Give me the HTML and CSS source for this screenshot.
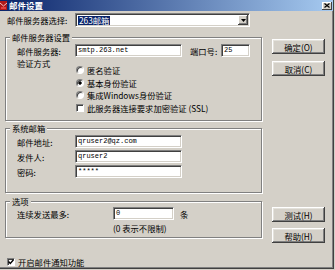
FILE: index.html
```html
<!DOCTYPE html>
<html lang="zh-CN">
<head>
<meta charset="utf-8">
<title>邮件设置</title>
<link rel="stylesheet" href="styles.css">
</head>
<body>
<div class="window">
  <div class="titlebar">
    <svg class="app-icon" width="7" height="9" viewBox="0 0 7 9"><rect x="0" y="0" width="7" height="9" fill="#b01818"/><path d="M0 2 L3.5 5 L7 2" fill="none" stroke="#f2c0c0" stroke-width="1"/><rect x="1" y="6" width="5" height="2" fill="#e04040"/></svg>
    <span class="title">邮件设置</span>
    <span class="close"><svg width="6" height="5" viewBox="0 0 6 5"><path d="M0.5 0.5 L5.5 4.5 M5.5 0.5 L0.5 4.5" stroke="#000" stroke-width="1.2"/></svg></span>
  </div>
  <div class="content">
    <div class="top-row">
      <span class="top-label">邮件服务器选择:</span>
      <div class="combo">
        <span class="combo-sel">263邮箱</span>
        <span class="combo-btn"><svg width="5" height="3" viewBox="0 0 5 3"><path d="M0 0 H5 L2.5 3 Z" fill="#000"/></svg></span>
      </div>
    </div>
    <div class="main">
      <div class="left">
        <fieldset class="group g1">
          <legend>邮件服务器设置</legend>
          <div class="inner">
            <div class="row">
              <span class="lbl">邮件服务器:</span>
              <div class="input w-smtp">smtp.263.net</div>
              <span class="lbl-port">端口号:</span>
              <div class="input w-port">25</div>
            </div>
            <div class="auth">
              <span class="lbl auth-lbl">验证方式</span>
              <div class="options">
                <div class="opt"><span class="radio"></span>匿名验证</div>
                <div class="opt"><span class="radio on"></span>基本身份验证</div>
                <div class="opt"><span class="radio"></span>集成Windows身份验证</div>
                <div class="opt"><span class="check"></span>此服务器连接要求加密验证 (SSL)</div>
              </div>
            </div>
          </div>
        </fieldset>
        <fieldset class="group g2">
          <legend>系统邮箱</legend>
          <div class="inner">
            <div class="row"><span class="lbl">邮件地址:</span><div class="input w-mail">qruser2@qz.com</div></div>
            <div class="row"><span class="lbl">发件人:</span><div class="input w-mail">qruser2</div></div>
            <div class="row"><span class="lbl">密码:</span><div class="input w-mail">*****</div></div>
          </div>
        </fieldset>
        <fieldset class="group g3">
          <legend>选项</legend>
          <div class="inner">
            <div class="row"><span class="lbl lbl-wide">连续发送最多:</span><div class="input w-num">0</div><span class="unit">条</span></div>
            <div class="note">(0 表示不限制)</div>
          </div>
        </fieldset>
      </div>
      <div class="right">
        <button class="btn b-ok">确定(O)</button>
        <button class="btn b-cancel">取消(C)</button>
        <button class="btn b-test">测试(H)</button>
        <button class="btn b-help">帮助(H)</button>
      </div>
    </div>
    <div class="notify"><span class="check checked"><svg width="6" height="6" viewBox="0 0 6 6"><path d="M0.5 2.5 L2.3 4.5 L5.5 0.8" fill="none" stroke="#000" stroke-width="1.4"/></svg></span>开启邮件通知功能</div>
  </div>
</div>
</body>
</html>
```
FILE: styles.css
```css
* { box-sizing: border-box; }
html, body { margin: 0; padding: 0; }
body {
  width: 335px;
  height: 270px;
  overflow: hidden;
  background: #d4d0c8;
  font-family: "Noto Sans CJK SC", "Noto Sans", sans-serif;
  font-size: 8.3px;
  color: #000;
}
.window {
  width: 334px;
  height: 269px;
  background: #d4d0c8;
  box-shadow: inset -1px -1px #404040, inset -2px -2px #808080;
  display: flex;
  flex-direction: column;
}
.titlebar {
  height: 11px;
  margin-right: 1px;
  background: linear-gradient(to right, #0a246a, #a6caf0);
  display: flex;
  align-items: center;
}
.app-icon { display: block; margin-left: 0; }
.title {
  margin-left: 2px;
  color: #fff;
  font-weight: bold;
  font-size: 8.5px;
  line-height: 11px;
}
.close {
  margin-left: auto;
  margin-right: 1px;
  width: 10px;
  height: 8px;
  background: #d4d0c8;
  box-shadow: inset -1px -1px #404040, inset 1px 1px #fff;
  display: flex;
  align-items: center;
  justify-content: center;
}
.close svg { display: block; }
.content {
  padding: 2px 9px 0 5px;
  display: flex;
  flex-direction: column;
}
.top-row {
  display: flex;
  align-items: center;
  height: 14px;
}
.top-label { width: 70px; padding-left: 2px; line-height: 12px; }
.combo {
  width: 175px;
  height: 14px;
  padding: 2px;
  background: #fff;
  border: 1px solid;
  border-color: #808080 #fff #fff #808080;
  box-shadow: inset 1px 1px #404040, inset -1px -1px #d4d0c8;
  display: flex;
  align-items: center;
}
.combo-sel {
  background: #0a246a;
  color: #fff;
  line-height: 9px;
  padding: 0 1px;
  margin-left: 0;
}
.combo-btn {
  margin-left: auto;
  width: 10px;
  height: 10px;
  margin-right: -1px;
  background: #d4d0c8;
  box-shadow: inset -1px -1px #404040, inset 1px 1px #fff, inset -2px -2px #808080;
  display: flex;
  align-items: center;
  justify-content: center;
}
.combo-btn svg { display: block; }
.main {
  display: flex;
  margin-top: 4px;
}
.left {
  width: 257px;
  display: flex;
  flex-direction: column;
}
.group {
  margin: 0;
  padding: 0;
  min-width: 0;
  border: 1px solid #808080;
  box-shadow: inset 1px 1px #fff, 1px 1px #fff;
}
.group legend {
  margin-left: 4px;
  padding: 0 2px;
  line-height: 12px;
  background: #d4d0c8;
}
.inner { padding-left: 11px; }
.g1 .inner { padding-top: 1px; padding-bottom: 6px; }
.g2 { margin-top: 1px; }
.g2 .inner { padding-top: 1px; padding-bottom: 14px; display: flex; flex-direction: column; gap: 2px; }
.g3 { margin-top: 2px; }
.g3 .inner { padding-bottom: 3px; }
.row {
  display: flex;
  align-items: center;
  height: 13px;
}
.lbl { width: 58px; line-height: 12px; }
.lbl-wide { width: 96px; }
.input {
  height: 13px;
  padding: 0 2px;
  background: #fff;
  border: 1px solid;
  border-color: #808080 #fff #fff #808080;
  box-shadow: inset 1px 1px #404040, inset -1px -1px #d4d0c8;
  font-family: "Liberation Mono", monospace;
  font-size: 7px;
  line-height: 11px;
  white-space: nowrap;
}
.w-smtp { width: 107px; }
.lbl-port { margin-left: 8px; width: 31px; line-height: 12px; }
.w-port { width: 29px; }
.w-mail { width: 107px; }
.w-num { width: 61px; }
.unit { margin-left: 6px; line-height: 12px; }
.auth { display: flex; }
.auth-lbl { line-height: 12px; }
.options {
  margin-top: 7px;
  display: flex;
  flex-direction: column;
}
.opt {
  display: flex;
  align-items: center;
  height: 12.5px;
  line-height: 12px;
}
.radio {
  width: 8px;
  height: 8px;
  margin-left: 1px;
  margin-right: 3px;
  border-radius: 50%;
  background: #fff;
  border: 1px solid;
  border-color: #808080 #fff #fff #808080;
  box-shadow: inset 1px 1px #404040;
}
.radio.on { background: radial-gradient(circle, #000 1.4px, #fff 1.9px); }
.check {
  width: 8px;
  height: 8px;
  margin-left: 1px;
  margin-right: 3px;
  background: #fff;
  border: 1px solid;
  border-color: #808080 #fff #fff #808080;
  box-shadow: inset 1px 1px #404040;
  display: flex;
  align-items: center;
  justify-content: center;
}
.check svg { display: block; }
.note {
  margin-top: 2px;
  padding-left: 96px;
  line-height: 12px;
}
.right {
  margin-left: 10px;
  width: 53px;
  display: flex;
  flex-direction: column;
}
.btn {
  width: 53px;
  height: 15px;
  padding: 0;
  border: none;
  background: #d4d0c8;
  box-shadow: inset -1px -1px #404040, inset 1px 1px #fff, inset -2px -2px #808080, inset 2px 2px #e4e2dc;
  font-family: "Noto Sans CJK SC", "Noto Sans", sans-serif;
  font-size: 8.3px;
  line-height: 12px;
  color: #000;
}
.b-ok { margin-top: 8px; }
.b-cancel { margin-top: 7px; }
.b-test { margin-top: 131px; }
.b-help { margin-top: 6px; }
.notify {
  margin-top: 13px;
  padding-left: 1px;
  display: flex;
  align-items: center;
  height: 12px;
  line-height: 12px;
}
```
